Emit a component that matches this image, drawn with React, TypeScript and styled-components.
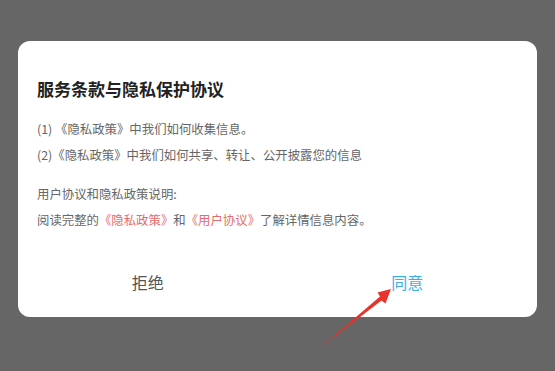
import React from "react";
import styled, { createGlobalStyle } from "styled-components";

const GlobalStyle = createGlobalStyle`
  html, body {
    margin: 0;
    padding: 0;
    background: #666666;
  }
  body {
    font-family: "Noto Sans CJK SC", "Noto Sans", sans-serif;
  }
`;

const Page = styled.div`
  position: relative;
  width: 555px;
  height: 371px;
  padding-top: 41px;
  box-sizing: border-box;
  display: flex;
  justify-content: center;
  align-items: flex-start;
  overflow: hidden;
`;

const Dialog = styled.div`
  width: 519px;
  height: 276px;
  background: #ffffff;
  border-radius: 12px;
  box-sizing: border-box;
  padding: 36px 19px 0;
  display: flex;
  flex-direction: column;
`;

const Title = styled.h1`
  margin: 0 0 15px;
  font-size: 17px;
  line-height: 24px;
  font-weight: 700;
  color: #222222;
`;

const Line = styled.p<{ gap?: number }>`
  margin: ${({ gap }) => gap ?? 0}px 0 0;
  font-size: 12.4px;
  line-height: 26px;
  color: #666666;
  white-space: nowrap;
`;

const Link = styled.span`
  color: #e36d6d;
`;

const Footer = styled.div`
  margin: auto -19px 0;
  height: 70px;
  display: flex;
`;

const Action = styled.button<{ primary?: boolean }>`
  flex: 1;
  border: none;
  background: transparent;
  font-family: inherit;
  font-size: 16px;
  color: ${({ primary }) => (primary ? "#3aaee6" : "#555555")};
  cursor: pointer;
`;

const Arrow = styled.svg`
  position: absolute;
  left: 0;
  top: 0;
  pointer-events: none;
`;

export default function App() {
  return (
    <Page>
      <GlobalStyle />
      <Dialog>
        <Title>服务条款与隐私保护协议</Title>
        <Line>(1) 《隐私政策》中我们如何收集信息。</Line>
        <Line>(2)《隐私政策》中我们如何共享、转让、公开披露您的信息</Line>
        <Line gap={13}>用户协议和隐私政策说明:</Line>
        <Line>
          阅读完整的<Link>《隐私政策》</Link>和<Link>《用户协议》</Link>了解详情信息内容。
        </Line>
        <Footer>
          <Action>拒绝</Action>
          <Action primary>同意</Action>
        </Footer>
      </Dialog>
      <Arrow width="555" height="371" viewBox="0 0 555 371">
        <polygon
          points="321,347 381.5,300.5 385.5,303.5 391,289 377.5,292.5 380,296.5"
          fill="#e8322b"
        />
      </Arrow>
    </Page>
  );
}
